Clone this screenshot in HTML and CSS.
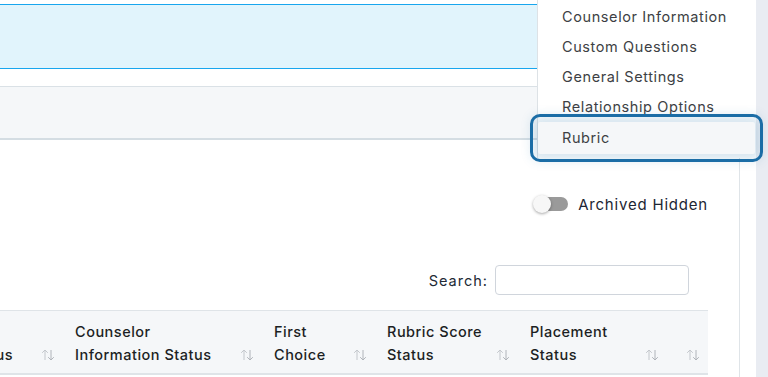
FILE: index.html
```html
<!DOCTYPE html>
<html lang="en">
<head>
    <meta charset="UTF-8">
    <meta name="viewport" content="width=device-width, initial-scale=1.0">
    <title>Applications</title>
    <link rel="stylesheet" href="styles.css">
</head>
<body>
    <main id="page">
        <section id="content">
            <div class="notice"></div>
            <div class="band"></div>

            <div class="toolbar">
                <label class="switch">
                    <span class="track"><span class="knob"></span></span>
                    <span class="switch-label">Archived Hidden</span>
                </label>
            </div>

            <div class="search-row">
                <label for="search">Search:</label>
                <input id="search" type="text">
            </div>

            <div class="table-wrap">
                <div class="thead">
                    <div class="th first"><span class="th-text">Status</span><span class="sort"></span></div>
                    <div class="th"><span class="th-text">Counselor<br>Information Status</span><span class="sort"></span></div>
                    <div class="th"><span class="th-text">First<br>Choice</span><span class="sort"></span></div>
                    <div class="th"><span class="th-text">Rubric Score<br>Status</span><span class="sort"></span></div>
                    <div class="th"><span class="th-text">Placement<br>Status</span><span class="sort"></span></div>
                    <div class="th"><span class="th-text"></span><span class="sort"></span></div>
                </div>
            </div>
        </section>
        <div class="gutter"></div>
        <aside class="side"></aside>

        <ul class="menu">
            <li class="menu-item">Counselor Information</li>
            <li class="menu-item">Custom Questions</li>
            <li class="menu-item">General Settings</li>
            <li class="menu-item">Relationship Options</li>
            <li class="menu-item active">Rubric</li>
        </ul>
    </main>

    <script>
        let icon = '<svg width="14" height="12" viewBox="0 0 14 12"><path d="M4 11V1M1.2 3.8L4 1l2.8 2.8" fill="none" stroke="#c3c7cc" stroke-width="1"/><path d="M10 1v10M7.2 8.2L10 11l2.8-2.8" fill="none" stroke="#b0b4ba" stroke-width="1"/></svg>';
        let sorts = document.querySelectorAll('.sort');
        for (let i = 0; i < sorts.length; i++) {
            sorts[i].innerHTML = icon;
        }
    </script>
</body>
</html>
```

FILE: styles.css
```css
body{
    margin: 0;
    padding: 0;
    overflow: hidden;
    font-family: Inter, "Noto Sans", sans-serif;
    background-color: #ffffff;
}

#page{
    position: relative;
    display: flex;
    height: 377px;
}

#content{
    width: 739px;
    border-right: 1px solid #dfe4e8;
    display: flex;
    flex-direction: column;
}

.gutter{
    width: 16px;
    background-color: #ffffff;
}

.side{
    flex: 1;
    background-color: #e9ecf2;
}

.notice{
    margin-top: 4px;
    height: 63px;
    background-color: #e1f4fc;
    border-top: 1px solid #18a6ee;
    border-bottom: 1px solid #18a6ee;
}

.band{
    margin-top: 17px;
    height: 51px;
    background-color: #f5f7f9;
    border-top: 1px solid #dae1e6;
    border-bottom: 2px solid #d4dde3;
}

.toolbar{
    display: flex;
    justify-content: flex-end;
    padding-right: 31px;
    margin-top: 53px;
}

.switch{
    display: flex;
    align-items: center;
    gap: 9px;
    height: 22px;
}

.track{
    position: relative;
    width: 34px;
    height: 14px;
    border-radius: 7px;
    background-color: #9a9a9a;
    margin-right: 1px;
}

.knob{
    position: absolute;
    left: -1px;
    top: -2px;
    width: 18px;
    height: 18px;
    border-radius: 50%;
    background-color: #f7f7f7;
    box-shadow: 0 1px 3px rgba(0,0,0,0.35);
}

.switch-label{
    font-size: 15px;
    color: #1d2633;
    letter-spacing: 0.8px;
}

.search-row{
    display: flex;
    justify-content: flex-end;
    align-items: center;
    gap: 7px;
    padding-right: 50px;
    margin-top: 50px;
    font-size: 14.5px;
    letter-spacing: 1px;
    color: #222a35;
}

.search-row input{
    width: 194px;
    padding: 0;
    border: 1px solid #d0d5dc;
    border-radius: 4px;
    box-sizing: border-box;
    height: 30px;
}

.table-wrap{
    margin-top: 15px;
    width: 708px;
}

.thead{
    display: grid;
    grid-template-columns: 63px 199px 113px 143px 149px 41px;
    height: 65px;
    box-sizing: border-box;
    background-color: #f5f7f9;
    border-top: 1px solid #dfe4e8;
    border-bottom: 2px solid #dfe4e8;
}

.th{
    display: flex;
    justify-content: space-between;
    align-items: flex-end;
    padding: 9px 8px 10px 12px;
    font-size: 14.5px;
    font-weight: 500;
    line-height: 23px;
    letter-spacing: 0.5px;
    color: #1c1f24;
}

.th.first .th-text{
    margin-left: -46px;
}

.sort{
    height: 23px;
    display: flex;
    align-items: center;
}

.menu{
    position: absolute;
    top: 0;
    left: 537px;
    width: 217px;
    margin: 0;
    padding: 2px 0 4px 0;
    list-style: none;
    background-color: #ffffff;
    border-left: 1px solid #dde2e6;
}

.menu-item{
    height: 30px;
    line-height: 30px;
    padding-left: 24px;
    font-size: 14.5px;
    letter-spacing: 0.6px;
    color: #3d3f44;
}

.menu-item.active{
    height: 32px;
    line-height: 32px;
    background-color: #f5f7f9;
    border-radius: 2px;
    outline: 3px solid #1b6da6;
    outline-offset: 5px;
    box-shadow: 0 0 12px 6px rgba(27,109,166,0.18);
}
```
